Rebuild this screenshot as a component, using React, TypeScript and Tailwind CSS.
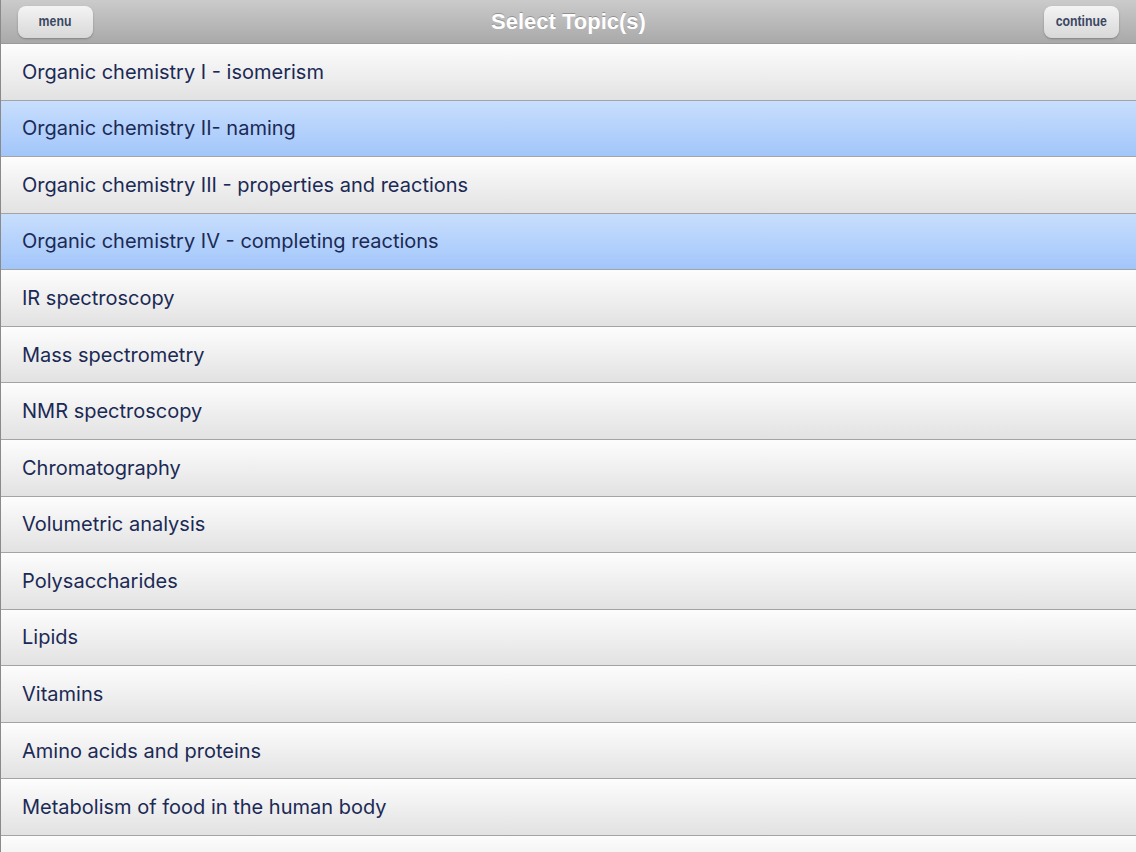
const topics = [
  { name: 'Organic chemistry I - isomerism', selected: false },
  { name: 'Organic chemistry II- naming', selected: true },
  { name: 'Organic chemistry III - properties and reactions', selected: false },
  { name: 'Organic chemistry IV - completing reactions', selected: true },
  { name: 'IR spectroscopy', selected: false },
  { name: 'Mass spectrometry', selected: false },
  { name: 'NMR spectroscopy', selected: false },
  { name: 'Chromatography', selected: false },
  { name: 'Volumetric analysis', selected: false },
  { name: 'Polysaccharides', selected: false },
  { name: 'Lipids', selected: false },
  { name: 'Vitamins', selected: false },
  { name: 'Amino acids and proteins', selected: false },
  { name: 'Metabolism of food in the human body', selected: false },
  // next row only peeks in at the bottom edge
  { name: '', selected: false },
];

function NavButton({ label }: { label: string }) {
  return (
    <button className="flex h-[32px] w-[75px] items-center justify-center rounded-[8px] bg-gradient-to-b from-[#f4f4f4] to-[#d8d8d8] shadow-[0_1px_2px_rgba(0,0,0,0.25)]">
      <span className="inline-block scale-x-[0.82] text-[15px] font-bold text-[#3b4863] font-['Liberation_Sans',sans-serif]">
        {label}
      </span>
    </button>
  );
}

function App() {
  return (
    <div className="h-[852px] w-[1136px] overflow-hidden bg-[#f2f2f2] border-l border-[#8a8a8a]">
      <div className="flex h-[44px] items-center justify-between bg-gradient-to-b from-[#cbcbcb] to-[#a9a9a9] px-[17px] border-b border-[#9a9a9a]">
        <NavButton label="menu" />
        <h1 className="text-[22px] font-bold text-white font-['Liberation_Sans',sans-serif] [text-shadow:0_-1px_0_rgba(0,0,0,0.25)]">
          Select Topic(s)
        </h1>
        <NavButton label="continue" />
      </div>
      <ul>
        {topics.map((t, i) => (
          <li
            key={i}
            className={`flex h-[56.57px] items-center border-b border-[#a4a4a4] pl-[21px] text-[20px] text-[#1b2a55] font-['Inter',sans-serif] ${
              t.selected
                ? 'bg-gradient-to-b from-[#c8defd] to-[#a2c6fa]'
                : 'bg-gradient-to-b from-[#fdfdfd] to-[#e2e2e2]'
            }`}
          >
            {t.name}
          </li>
        ))}
      </ul>
    </div>
  );
}

export default App;
